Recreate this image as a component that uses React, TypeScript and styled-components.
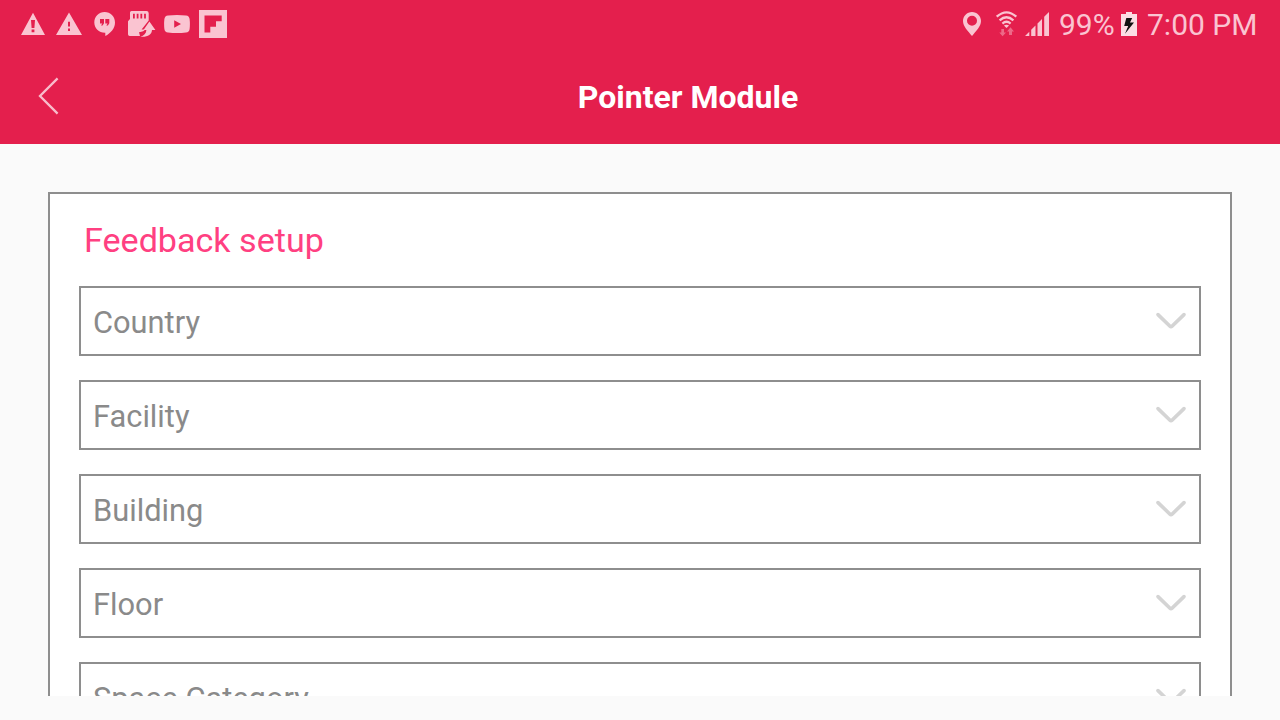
import React, { useState } from "react";
import styled, { createGlobalStyle } from "styled-components";

const fields = ["Country", "Facility", "Building", "Floor", "Space Category"];

export default function App() {
  const [selected, setSelected] = useState("");

  return (
    <Screen>
      <GlobalStyle />
      <StatusBar>
        <Notifications>
          <StatusIcons />
        </Notifications>
        <SystemStatus>
          <SignalIcons />
          <Percent>99%</Percent>
          <BatteryIcon />
          <Clock>7:00 PM</Clock>
        </SystemStatus>
      </StatusBar>

      <Header>
        <BackButton aria-label="Back">
          <svg width="24" height="40" viewBox="0 0 24 40" fill="none">
            <path d="M21.6 2.4L4 20L21.6 37.6" stroke="#f8bccb" strokeWidth="2.3" />
          </svg>
        </BackButton>
        <Title>Pointer Module</Title>
      </Header>

      <ScrollArea>
        <Card>
          <Heading>Feedback setup</Heading>
          {fields.map((field) => (
            <SelectField key={field} type="button" onClick={() => setSelected(field)} aria-pressed={selected === field}>
              <FieldLabel>{field}</FieldLabel>
              <svg width="34" height="22" viewBox="0 0 34 22" fill="none">
                <path d="M4 3.6L16 15.2Q17 16.2 18 15.2L30 3.6" stroke="#d4d4d4" strokeWidth="3.6" strokeLinecap="round" />
              </svg>
            </SelectField>
          ))}
        </Card>
      </ScrollArea>
    </Screen>
  );
}

// left side of the status bar
function StatusIcons() {
  return (
    <>
      <svg width="24" height="48" viewBox="21 0 24 48" fill="#fac4d1">
        <path fillRule="evenodd" d="M33 12.8L45 35H21ZM31 20L31.6 28H34.4L35 20ZM31.6 29.6V32.2H34.4V29.6Z" />
      </svg>
      <svg width="26" height="48" viewBox="56 0 26 48" fill="#fac4d1">
        <path fillRule="evenodd" d="M69 12.5L82 35H56ZM68 21.8V26.4H70V21.8ZM68 28.4V31H70V28.4Z" />
      </svg>
      <svg width="22" height="48" viewBox="94 0 22 48" fill="#fac4d1">
        <path fillRule="evenodd" d="M104.6 12C110.4 12 115 16.7 115 22.4C115 28.3 110.6 33.2 105.3 36V32.7C99 32.9 94.3 28.2 94.3 22.4C94.3 16.7 98.9 12 104.6 12ZM100 19V23.4H102.3L101 25.5H102.6L104 23.2V19ZM105.3 19V23.4H107.6L106.3 25.5H107.9L109.3 23.2V19Z" />
      </svg>
      <svg width="28" height="48" viewBox="128 0 28 48" fill="#fac4d1">
        <path fillRule="evenodd" d="M131.5 11H146.5Q148.7 11 148.7 13.2V20.5L141.6 29.5H144.8Q144.4 31.5 139 32.2L140 36H129.7Q128 36 128 34.3V21.3L130 19V12.5Q130 11 131.5 11ZM133 13.8V18.6H134.8V13.8ZM136.7 13.8V18.6H138.5V13.8ZM140.4 13.8V18.6H142.2V13.8ZM144.1 13.8V18.6H145.9V13.8Z" />
        <path d="M149.4 21.5L155.4 30H152C151.7 34.8 147.5 37.3 140.4 36.7C144 35.5 146.1 33.6 146.4 30H143.5Z" />
      </svg>
      <svg width="26" height="48" viewBox="164 0 26 48" fill="#fac4d1">
        <path fillRule="evenodd" d="M168 15.4Q177 14.4 186 15.4Q189.2 15.8 189.6 19Q190.2 24 189.6 29Q189.2 32.3 186 32.6Q177 33.6 168 32.6Q164.8 32.3 164.4 29Q163.8 24 164.4 19Q164.8 15.8 168 15.4ZM174.2 20.3V27.7L181 24Z" />
      </svg>
      <svg width="28" height="48" viewBox="199 0 28 48" fill="#fac4d1">
        <path fillRule="evenodd" d="M199 10H227V38H199ZM204.5 15.5V32.5H210.3V26.8H216V21.3H221.7V15.5Z" />
      </svg>
    </>
  );
}

function SignalIcons() {
  return (
    <svg width="88" height="48" viewBox="962 0 88 48" fill="#fac4d1">
      <path fillRule="evenodd" d="M972 12C977 12 981 16 981 21C981 26.5 976 31 972 36C968 31 963 26.5 963 21C963 16 967 12 972 12ZM972 15.8A5 5 0 1 0 972 25.8A5 5 0 1 0 972 15.8Z" />
      <g fill="none" stroke="#fac4d1" strokeWidth="2.3">
        <path d="M996.7 16.7Q1006.5 8 1016.3 16.7" />
        <path d="M999.6 20.3Q1006.5 14.2 1013.4 20.3" />
        <path d="M1002.4 23.6Q1006.5 20 1010.6 23.6" />
      </g>
      <path d="M1003.9 25.6Q1006.5 23.7 1009.1 25.6L1006.5 28Z" />
      <g opacity="0.45">
        <path d="M1001.3 29H1004V32.4H1006L1002.6 36.2L999.3 32.4H1001.3Z" />
        <path d="M1009 35H1012V31.5H1014L1010.5 27.2L1007 31.5H1009Z" />
      </g>
      <path d="M1025 36L1029.3 31.7V36ZM1031.2 29.8L1035.5 25.5V36H1031.2ZM1037.5 23.5L1042 19V36H1037.5ZM1044.2 16.8L1049 12V36H1044.2Z" />
    </svg>
  );
}

function BatteryIcon() {
  return (
    <svg width="16" height="48" viewBox="1121 0 16 48">
      <path fill="#fcdde4" d="M1126 12H1132V14H1137V36H1121V14H1126Z" />
      <path fill="#111" d="M1126.3 18H1132.2L1130 22.4H1134L1125 33.8L1128.2 26H1124.2Z" />
    </svg>
  );
}

const GlobalStyle = createGlobalStyle`
  * {
    box-sizing: border-box;
  }
  body {
    margin: 0;
    background: #fafafa;
    font-family: Roboto, sans-serif;
  }
`;

const Screen = styled.div`
  width: 1280px;
  height: 720px;
  display: flex;
  flex-direction: column;
  overflow: hidden;
  background: #fafafa;
`;

const StatusBar = styled.div`
  height: 48px;
  flex: none;
  display: flex;
  justify-content: space-between;
  padding: 0 23px 0 21px;
  background: #e41f4d;
  color: #fac4d1;

  svg {
    display: block;
    flex: none;
  }
`;

const Notifications = styled.div`
  display: flex;
  column-gap: 11px;

  svg:nth-child(3),
  svg:nth-child(4) {
    margin-left: 1px;
  }
  svg:nth-child(5) {
    margin-left: -3px;
  }
  svg:nth-child(6) {
    margin-left: -2px;
  }
`;

const SystemStatus = styled.div`
  display: flex;
  font-size: 30px;
  line-height: 49px;
  white-space: nowrap;
`;

const Percent = styled.span`
  width: 56px;
  margin: 0 6px 0 9px;
`;

const Clock = styled.span`
  width: 110px;
  margin-left: 10px;
`;

const Header = styled.header`
  height: 96px;
  flex: none;
  display: flex;
  align-items: center;
  background: #e41f4d;
`;

const BackButton = styled.button`
  width: 96px;
  height: 96px;
  padding: 0 0 0 36px;
  border: none;
  background: none;
  cursor: pointer;

  svg {
    display: block;
  }
`;

const Title = styled.h1`
  flex: 1;
  margin: 0;
  padding-top: 2px;
  font-size: 32px;
  font-weight: 700;
  line-height: 38px;
  text-align: center;
  color: #fff;
`;

const ScrollArea = styled.main`
  flex: 1;
  min-height: 0;
  margin: 48px 48px 24px;
  overflow: hidden;
`;

const Card = styled.section`
  display: flex;
  flex-direction: column;
  gap: 24px;
  padding: 24px 29px;
  border: 2px solid #8e8e8e;
  background: #fff;
`;

const Heading = styled.h2`
  margin: 0 0 0 5px;
  font-size: 34.1px;
  font-weight: 400;
  line-height: 44px;
  color: #ff4081;
`;

const SelectField = styled.button`
  height: 70px;
  flex: none;
  display: flex;
  align-items: center;
  justify-content: space-between;
  padding: 2px 11px 0 12px;
  border: 2px solid #8e8e8e;
  background: #fff;
  color: #8a8a8a;
  font-family: inherit;
  font-size: 30.8px;
  line-height: 36px;
  cursor: pointer;
`;

const FieldLabel = styled.span`
  padding-top: 2px;
`;
